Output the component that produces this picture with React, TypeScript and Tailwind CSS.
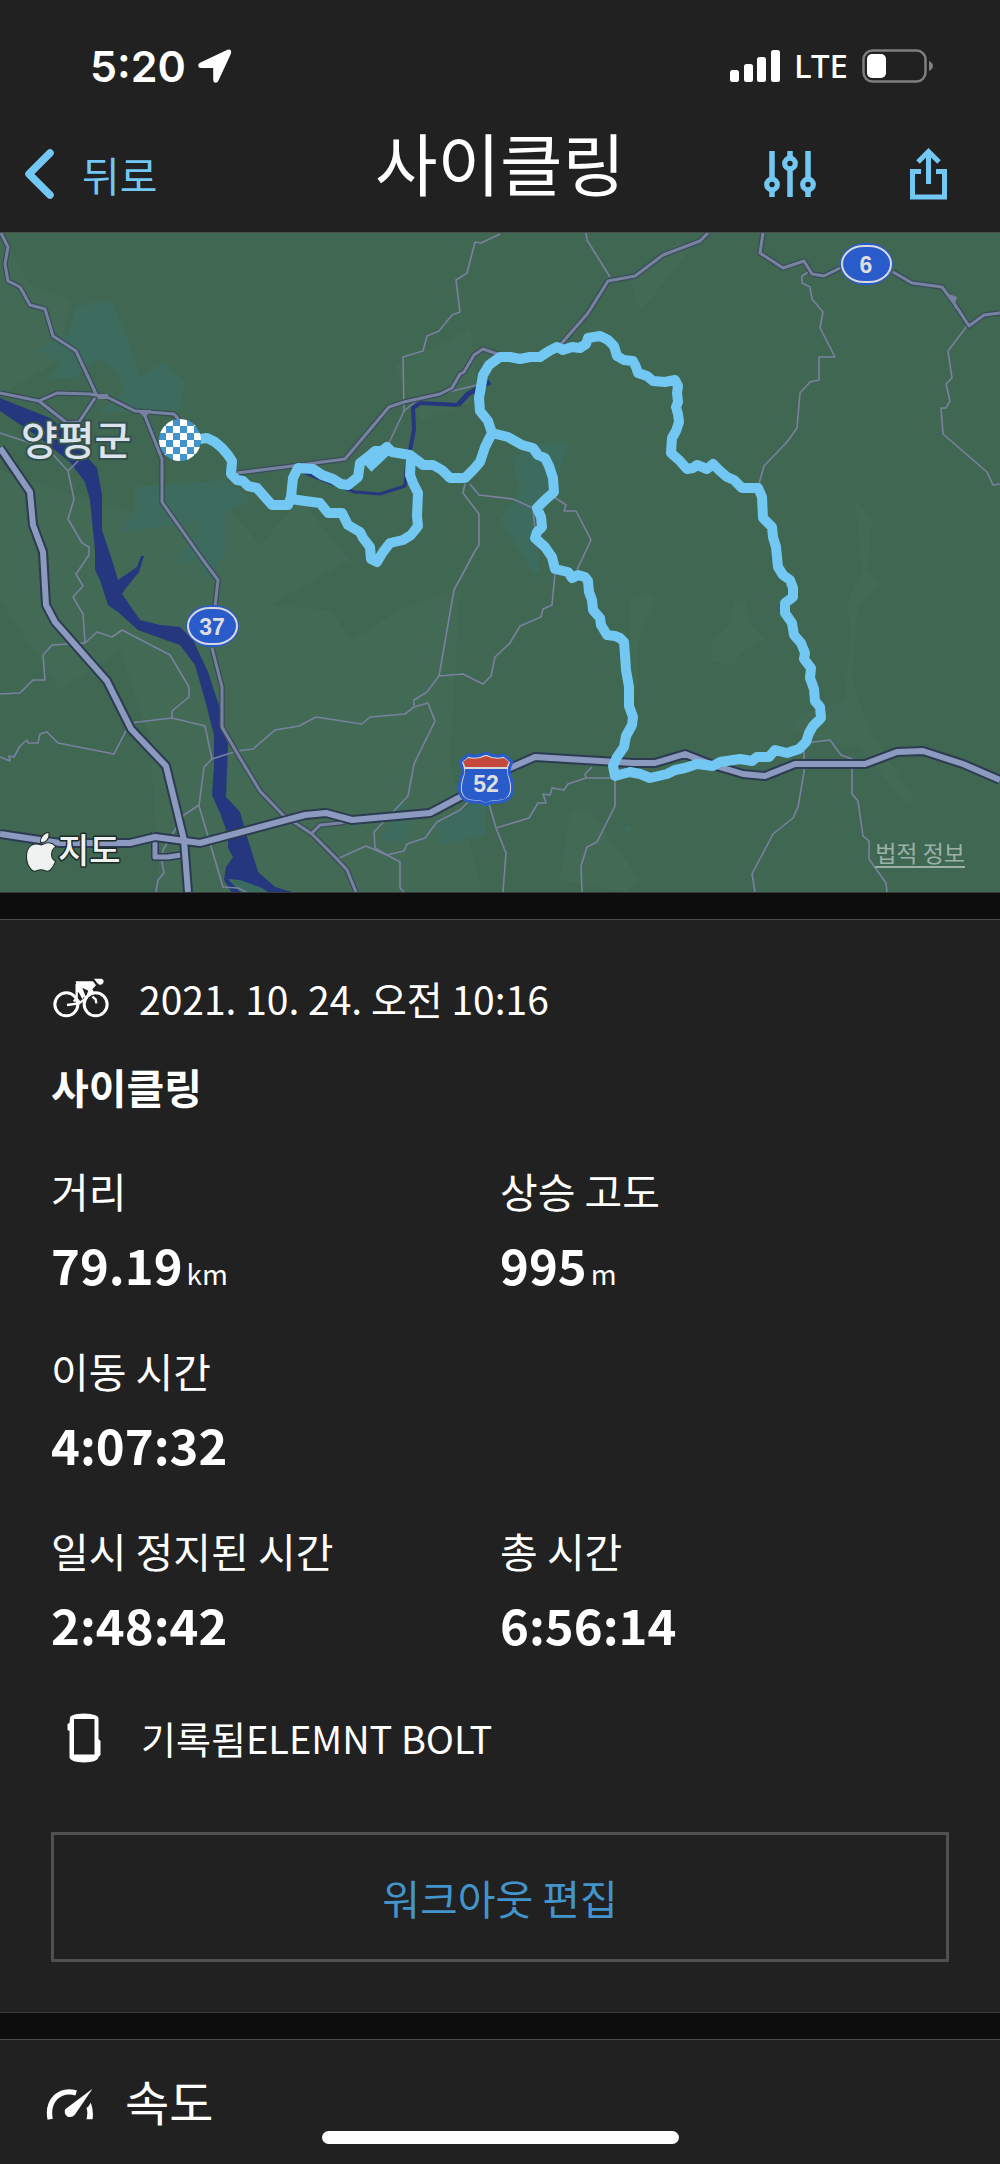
import { ReactNode } from "react";

interface Stat {
  label: string;
  value: string;
  unit?: string;
}

const STAT_ROWS: Stat[][] = [
  [
    { label: "거리", value: "79.19", unit: "km" },
    { label: "상승 고도", value: "995", unit: "m" },
  ],
  [{ label: "이동 시간", value: "4:07:32" }],
  [
    { label: "일시 정지된 시간", value: "2:48:42" },
    { label: "총 시간", value: "6:56:14" },
  ],
];

const FOREST = [
  "0,233 30,285 70,300 60,360 0,395",
  "0,470 90,500 160,520 230,510 260,545 300,500 350,560 270,605 330,610 352,640 400,610 460,590 450,760 482,892 160,892 150,740 120,650 60,690 0,600",
  "395,365 470,330 480,400 420,420",
  "640,310 630,280 680,240 690,250 650,300 620,330",
  "630,600 650,592 655,602 640,630 636,700 630,660",
  "712,640 730,625 735,600 745,602 750,625 765,638 745,650 732,665 712,662",
  "855,500 872,520 868,570 880,585 858,605 852,680 870,730 915,800 905,805 860,745 835,745 792,730 800,715 845,700 850,640 848,600 862,570",
  "570,812 590,810 640,880 625,892 560,880",
];

const LOWLAND = [
  "35,350 68,335 75,308 92,302 112,303 120,320 133,355 140,378 163,362 185,382 180,410 165,413 98,412 125,390 115,372 98,358 75,378 50,378 60,362",
  "135,487 225,480 252,500 226,512 225,555 205,580 198,560 172,563 188,545 198,523 150,528 120,532 135,510",
  "500,520 520,490 512,458 540,444 568,442 560,470 552,500 535,520 540,572 535,575",
  "440,845 436,825 470,805 485,800 486,835 460,840",
  "380,840 400,806 414,808 405,842",
  "622,828 629,825 632,830 627,834",
];

const LOCAL_ROADS = [
  "586,233 587,240 610,277",
  "500,234 481,243 475,242 467,273 456,280 460,312 452,315 439,331 427,336 423,351 403,357 404,411 389,443",
  "404,411 415,402 440,394 477,385",
  "808,272 802,276 802,283 810,287 812,299 823,312 820,328 835,357 819,357 819,380 810,382 800,393 797,428 787,442 764,466 759,484",
  "967,326 948,351 952,378 946,384 950,401 946,408 941,408 943,434 987,472 993,485 1000,484",
  "465,484 463,493 479,514 479,545 475,551 454,590 439,676 427,692 414,700 414,707 405,714 370,717 362,724 316,717 299,726 275,730 253,749 237,751 212,759 204,767 199,806 223,887 238,888 248,893",
  "439,676 463,674 483,684 491,676 495,657 510,643 520,626 541,617 543,609 552,605 555,573",
  "414,707 428,703 435,721 414,764 408,796 374,832 375,848 387,855 400,862 400,888 404,892",
  "337,859 366,846 387,855 404,851 407,844 425,838 437,822 460,810 470,800",
  "470,484 479,495 513,499 533,508 535,530",
  "554,497 566,505 564,511 576,511 591,540 577,570",
  "0,433 48,449 68,471 74,499 68,519 82,543 89,547 89,555 76,574 83,586 73,597 83,614 85,643 97,632 112,637 122,630 170,655 189,687 189,697 172,711 172,718 205,726 212,759",
  "82,457 68,471",
  "85,643 68,644 52,645 43,655 45,680 33,680 20,693 0,694",
  "172,718 130,723 114,754 58,743 47,732 40,734 38,743 28,743 27,740 20,746 14,757 9,756 10,761 0,757",
  "199,805 184,815 163,850 162,862 164,873 158,880 156,892",
  "805,743 830,740 841,755 852,759 852,794 858,801 863,836 869,841 869,859 886,883 887,892",
  "804,750 804,772 798,807 793,818 773,834 752,874 755,892",
  "615,780 615,806 597,842 587,847 581,866 582,892",
  "615,778 586,778 568,784 564,790 552,788 550,795 543,794 546,803 538,803 529,818 496,828",
  "586,778 585,774 592,767",
  "488,800 496,828 506,853 503,892",
];

const MAIN_ROADS = [
  "1,233 8,247 5,264 8,281 20,287 30,305 45,309 53,336 76,351 97,396",
  "0,393 39,401 57,393 90,394 107,397 135,411 174,414 181,422",
  "39,401 67,423 79,422 95,398",
  "143,411 162,459 162,502 203,560 218,580 215,607",
  "212,648 222,687 222,727 240,758 260,791 283,815 312,834 337,859 347,870 356,892",
  "237,473 285,467 345,459 389,407 404,402 440,394 452,388 460,374 464,372 474,355 483,349 500,355",
  "561,344 588,313 608,281 635,276 663,255 700,241 708,233",
  "763,233 760,253 783,268 804,261 812,274 824,276 840,268",
  "893,272 912,283 942,287 954,303 969,326 984,315 1000,313",
  "311,834 320,825 340,823 352,820",
];

const HIGHWAYS = [
  "0,448 30,492 33,525 43,552 46,605 55,622 107,681 131,729 166,766 184,840 188,892",
  "0,834 60,843 130,843 155,837 200,843 305,815 326,813 352,820 430,813 462,796 510,768 535,757 633,763 655,763 685,754 713,765 743,774 765,776 795,764 865,764 897,752 923,751 963,764 1000,780",
];

const RIVER =
  "0,398 50,418 67,432 85,455 97,468 102,495 102,530 112,560 118,580 137,567 141,556 144,556 139,572 126,588 122,594 140,620 160,625 180,627 193,640 208,672 222,715 228,745 226,797 240,812 245,830 258,872 275,887 295,893 232,893 224,880 226,867 233,857 228,848 228,835 220,813 212,795 214,765 214,735 205,700 195,665 180,645 160,638 138,630 118,612 108,605 100,580 95,570 95,550 90,500 85,482 70,462 40,438 0,411";

const ROUTE = [
  "200,439 207,438 215,442 222,448 228,455 232,461 231,474 237,480 243,481 248,486 257,488 264,496 272,505 288,505 291,497 293,478 298,468 313,469 322,475 333,479 341,484 348,485 358,477 360,463 368,457 375,451 382,451 387,447 392,452 410,455 418,461 423,465 433,465 442,470 450,478 465,478 474,469 480,462 485,447 492,433 488,421 480,411 479,398 481,387 483,375 489,365 500,357 510,357 520,359 530,357 540,357 549,351 557,347 563,350 572,347 580,348 586,344 588,338 600,336 608,340 614,346 617,356 624,360 633,361 636,367 638,373 647,376 653,381 665,382 675,380 678,386 677,393 678,402 676,407 678,414 679,422 676,431 672,438 671,453 679,460 687,469 693,468 697,465 707,469 713,464 720,471 727,477 734,480 742,488 758,488 762,497 763,518 772,527 773,537 776,547 778,567 783,575 790,580 793,588 793,597 785,603 785,613 792,623 794,635 801,643 805,653 804,659 811,668 810,678 814,689 815,701 820,707 821,718 813,726 809,733 806,742 799,749 787,753 775,750 769,757 757,757 752,761 740,759 720,762 713,766 697,764 685,768 675,770 667,774 650,778 640,774 630,772 615,776 613,766 617,757 624,747 626,736 632,725 633,717 629,706 629,687 626,670 625,655 624,642 620,638 615,636 607,635 601,625 600,618 593,610 592,600 589,592 588,581 585,577 578,575 572,578 568,572 555,569 552,557 545,547 535,538 537,532 542,527 541,517 537,508 546,499 554,492 553,478 549,466 545,458 538,455 533,448 522,445 515,441 508,437 492,433",
  "291,499 305,501 320,503 328,513 342,513 348,525 360,532 363,538 370,547 371,559 377,562 383,552 390,543 403,540 411,535 415,530 418,526 417,516 418,493 413,483 410,475 411,456",
  "368,468 387,450",
];

function Lines({ lines, color, width }: { lines: string[]; color: string; width: number }) {
  return (
    <g fill="none" stroke={color} strokeWidth={width} strokeLinejoin="round">
      {lines.map((points) => (
        <polyline key={points} points={points} />
      ))}
    </g>
  );
}

function RouteBadge({ x, y, children }: { x: number; y: number; children: ReactNode }) {
  return (
    <g>
      <rect x={x - 26} y={y - 21} width="53" height="42" rx="25" ry="21" fill="#2a5bcb" />
      <rect x={x - 24} y={y - 18} width="49" height="36" rx="22" ry="18" fill="none" stroke="#d6d8dc" strokeWidth="2" />
      <text x={x} y={y + 9} textAnchor="middle" fill="#dcdee2" className="font-['Liberation_Sans'] text-[23px] font-bold">
        {children}
      </text>
    </g>
  );
}

function RouteMap() {
  return (
    <svg viewBox="0 233 1000 659" className="block w-full bg-[#406752]" role="img" aria-label="양평군">
      <defs>
        <pattern id="checker" width="14" height="14" x="173" y="433" patternUnits="userSpaceOnUse">
          <rect width="14" height="14" fill="#fff" />
          <rect width="7" height="7" fill="#4294cb" />
          <rect x="7" y="7" width="7" height="7" fill="#4294cb" />
        </pattern>
      </defs>

      <g fill="#426a55">
        {FOREST.map((points) => (
          <polygon key={points} points={points} />
        ))}
      </g>
      <g fill="#3d6b5e">
        {LOWLAND.map((points) => (
          <polygon key={points} points={points} />
        ))}
      </g>

      {/* Water */}
      <polygon points={RIVER} fill="#24377f" />
      <polygon points="228,879 240,880 262,888 268,892 240,892" fill="#3c6c60" />
      <g fill="none" stroke="#24377f" strokeLinejoin="round">
        <polyline points="305,473 333,484 355,492 380,494 405,486 407,455" strokeWidth="3" />
        <polyline points="409,455 414,430 413,408 420,403 458,405" strokeWidth="4" />
        <polyline points="458,405 468,394 490,382" strokeWidth="5" />
      </g>

      {/* Roads, each class drawn over its darker casing */}
      <Lines lines={LOCAL_ROADS} color="#7882a0" width={1.6} />
      <Lines lines={MAIN_ROADS} color="#3a4c58" width={5.5} />
      <Lines lines={MAIN_ROADS} color="#7782a1" width={3} />
      <path d="M96 394h12v5h-10zM137 410h14l-6 8z" fill="#7782a1" />
      <path d="M949 294l8 3-2 7 8 10-8-6z" fill="#7782a1" />
      <Lines lines={["155,832 155,857 168,857 181,855"]} color="#2d3b50" width={8} />
      <Lines lines={["155,832 155,857 168,857 181,855"]} color="#8794b8" width={5} />
      <Lines lines={HIGHWAYS} color="#2d3b50" width={10} />
      <Lines lines={HIGHWAYS} color="#8c9abf" width={6} />

      {/* Recorded track */}
      <Lines lines={ROUTE} color="#72c8f2" width={10} />
      <circle cx="180" cy="440" r="21" fill="url(#checker)" />

      <RouteBadge x={212} y={626}>37</RouteBadge>
      <RouteBadge x={866} y={264}>6</RouteBadge>
      <g>
        <path
          d="M468 755q9 3 18-2 9 5 18 2l8 7q-5 8-1 16 4 14-2 20-5 4-12 4-7 0-11 3-4-3-11-3-8 0-12-4-6-6-2-20 4-8-1-16z"
          fill="#d6d8dc"
          stroke="#2a5bcb"
          strokeWidth="3"
          strokeLinejoin="round"
        />
        <path d="M468 758q10 2 18-2 8 4 18 2l5 4q-2 3-2 5h-42q0-2-2-5z" fill="#c4483c" />
        <path d="M465 769h42q0 6 2 11 3 12-2 17-3 3-10 3-7 0-11 3-4-3-11-3-7 0-10-3-5-5-2-17 2-5 2-11z" fill="#2a5bcb" />
        <text x="486" y="792" textAnchor="middle" fill="#dcdee2" className="font-['Liberation_Sans'] text-[23px] font-bold">
          52
        </text>
      </g>

      <text
        x="21"
        y="455"
        fill="#dbe3ec"
        stroke="#34504c"
        strokeWidth="4"
        paintOrder="stroke"
        className="font-['Noto_Sans_CJK_KR',sans-serif] text-[40px] font-medium"
      >
        양평군
      </text>

      {/* Map provider */}
      <g fill="#f0f2f1" stroke="#1b2b25" strokeWidth="2" paintOrder="stroke" strokeLinejoin="round">
        <path d="M48.500 833q.5 4-2 7-2.500 2.500-5.500 2 0-4 2-6 2.500-3 5.500-3z" />
        <path d="M41 845.500c3 0 5-3 9-2q3 .5 5 3-4 3-4 8 0 5 4 7-2 5-5 8-2 2-5 .5-4-1.500-8 0-3 1.500-5-.5-5-5-5-13 0-8 5-11 4-2 9 0z" />
        <text x="58" y="863" strokeWidth="3" className="font-['Noto_Sans_CJK_KR',sans-serif] text-[34px] font-medium">
          지도
        </text>
      </g>
    </svg>
  );
}

function StatusBar() {
  return (
    <div className="flex items-center justify-between pt-9 pr-[67px] pl-[90px]">
      <div className="flex items-center gap-3 leading-[60px]">
        <span className="font-['Inter',sans-serif] text-[43px] font-semibold">5:20</span>
        <svg className="h-[34px] w-[34px]" viewBox="0 0 34 34" fill="currentColor">
          <path d="M29.500 .8Q34 -.5 33 4.500L20.500 31.500Q19.500 34 17.500 33.800Q15.300 33.500 15.200 31V19H3Q.5 19 .2 16.700Q0 14.700 2.500 13.500Z" />
        </svg>
      </div>
      <div className="flex items-center gap-[14px]">
        <svg className="h-8 w-[50px]" viewBox="0 0 50 32" fill="currentColor">
          <rect y="20" width="9" height="12" rx="2.500" />
          <rect x="14" y="14" width="9" height="18" rx="2.500" />
          <rect x="27" y="7" width="9" height="25" rx="2.500" />
          <rect x="41" width="9" height="32" rx="2.500" />
        </svg>
        <span className="font-['Noto_Sans',sans-serif] text-[33px] leading-[60px] font-medium">LTE</span>
        <svg className="h-[34px] w-[71px]" viewBox="0 0 71 34">
          <rect x="1.500" y="1.500" width="62" height="31" rx="9" fill="none" stroke="#7f7f7f" strokeWidth="2.500" />
          <rect x="5" y="5" width="19" height="24" rx="5" fill="#fff" />
          <path d="M67 12q4 2 4 5t-4 5z" fill="#7f7f7f" />
        </svg>
      </div>
    </div>
  );
}

function NavBar() {
  return (
    <nav className="grid grid-cols-[1fr_auto_1fr] items-center pt-7 pb-2">
      <button className="flex items-center gap-7 pl-6 text-[41px] leading-[60px] text-[#72c8f2]">
        <svg className="h-[50px] w-[30px]" viewBox="0 0 30 50" fill="none" stroke="currentColor" strokeWidth="7.500" strokeLinecap="round" strokeLinejoin="round">
          <path d="M26 4 5 25l21 21" />
        </svg>
        뒤로
      </button>
      <h1 className="pb-6 text-[68px] leading-[76px]">사이클링</h1>
      <div className="flex items-center justify-end gap-[94px] pr-[53px] text-[#72c8f2]">
        <button aria-label="필터">
          <svg className="h-12 w-[52px]" viewBox="0 0 52 48" fill="none" stroke="currentColor">
            <path d="M8 1v27M8 41v6M26 1v6M26 20v27M44 1v27M44 41v6" strokeWidth="5.500" />
            <g strokeWidth="5.200">
              <circle cx="8" cy="34.500" r="5.300" />
              <circle cx="26" cy="13.500" r="5.300" />
              <circle cx="44" cy="34.500" r="5.300" />
            </g>
          </svg>
        </button>
        <button aria-label="공유">
          <svg className="h-[52px] w-[37px]" viewBox="0 0 37 52" fill="none" stroke="currentColor" strokeWidth="5">
            <path d="M11 23.500H2.500V49H34.500V23.500H26M18.500 36V4M8 14 18.500 3.500 29 14" />
          </svg>
        </button>
      </div>
    </nav>
  );
}

function StatBlock({ stat }: { stat: Stat }) {
  return (
    <div>
      <dt className="text-[41px] leading-[60px]">{stat.label}</dt>
      <dd className="mt-2 flex h-[72px] items-baseline gap-1 text-[49px] leading-[72px] font-bold">
        {stat.value}
        {stat.unit && <span className="text-[28px] leading-10 font-normal">{stat.unit}</span>}
      </dd>
    </div>
  );
}

function Divider() {
  return <div className="h-7 border-y border-t-[#3a3a3a] border-b-[#4a4a4a] bg-[#0d0d0d]" />;
}

export default function App() {
  return (
    <div className="relative min-h-screen bg-[#212121] font-['Noto_Sans_CJK_KR',sans-serif] text-white">
      <header className="border-b border-[#4a4f4d]">
        <StatusBar />
        <NavBar />
      </header>

      <div className="relative">
        <RouteMap />
        <a href="#legal" className="absolute right-[35px] bottom-6 border-b-2 border-[#9bb1a6] text-[23px] leading-7 text-[#9bb1a6]">
          법적 정보
        </a>
      </div>
      <Divider />

      <section className="px-[51px] pt-12 pb-[50px]">
        <div className="flex items-center gap-[30px] pl-0.5 text-[39px] leading-[60px]">
          <svg className="h-10 w-14" viewBox="40 28 168 120" fill="none" stroke="#fff">
            <circle cx="80" cy="107" r="34.500" strokeWidth="9" />
            <circle cx="168" cy="107" r="34.500" strokeWidth="9" />
            <path d="M111 46v44l8 10M112 62l28 26-22 16-36 5M112 90l-10 8M158 84l10 8 2 12" strokeWidth="7" />
            <path d="M108 38H160L169 50 158 62 162 68 149 83 141 78 146 66 128 57 136 78 128 92 112 60Z" fill="#fff" stroke="none" />
            <path d="M163 30H186Q194 33 191 42 188 50 179 48 172 44 163 30Z" fill="#fff" stroke="none" />
          </svg>
          <time dateTime="2021-10-24T10:16">2021. 10. 24. 오전 10:16</time>
        </div>
        <h2 className="mt-7 text-[41px] leading-[60px] font-bold">사이클링</h2>

        <dl className="mt-11 flex flex-col gap-10">
          {STAT_ROWS.map((row) => (
            <div key={row[0].label} className="grid grid-cols-2">
              {row.map((stat) => (
                <StatBlock key={stat.label} stat={stat} />
              ))}
            </div>
          ))}
        </dl>

        <div className="mt-12 flex items-center gap-10 pl-4 text-[38px] leading-[60px]">
          <svg className="h-[50px] w-[34px]" viewBox="0 0 34 50" fill="#fff">
            <path d="M3 5Q3 1 17 .5 31 1 31.500 5V26l2 2v14l-2 2Q31 49 17 49.500 3 49 2.500 44V18L.5 17V11l2-1ZM7 6V41.500H27.500V6Z" fillRule="evenodd" />
          </svg>
          <span>기록됨ELEMNT BOLT</span>
        </div>

        <button className="mt-16 w-full border-[3px] border-[#505050] py-8 text-[41px] leading-[60px] text-[#4294cb]">
          워크아웃 편집
        </button>
      </section>
      <Divider />

      <section className="flex items-center gap-8 px-[46px] pt-6 pb-6">
        <svg className="mt-2 h-8 w-[47px]" viewBox="48 60 140 96" fill="none" stroke="#fff" strokeWidth="16">
          <path d="M60 154Q52 112 76 88 102 64 138 75" />
          <path d="M174 116L182 104Q191 128 187 154H169Q174 132 169 120Z" fill="#fff" stroke="none" />
          <path d="M187 62 134 140Q126 150 112 146 100 138 105 124Z" fill="#fff" stroke="none" />
        </svg>
        <h2 className="text-[48px] leading-[72px]">속도</h2>
      </section>

      {/* Home indicator */}
      <div className="absolute inset-x-0 bottom-5 mx-auto h-[13px] w-[357px] rounded-full bg-white" />
    </div>
  );
}
